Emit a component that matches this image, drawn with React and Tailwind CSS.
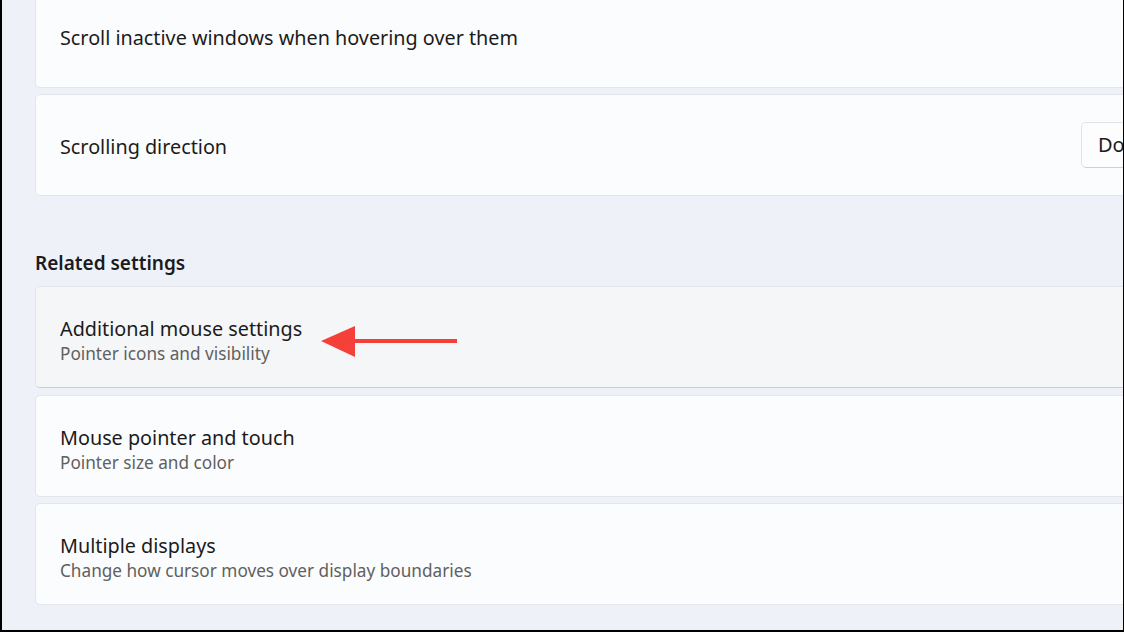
import React from "react";

const font = { fontFamily: '"Noto Sans", "Open Sans", sans-serif' };

function Card({ title, subtitle, hover, children, className = "", tPad = "pt-[1px]" }) {
  return (
    <div
      className={`flex h-[102px] w-[1110px] shrink-0 items-center justify-between rounded-[5px] border pl-[24px] ${
        hover
          ? "border-[#e3e5e9] border-b-[#c9ccd1] bg-[#f5f6f8]"
          : "border-[#e4e6ea] bg-[#fbfcfd]"
      } ${className}`}
    >
      <div className={`flex flex-col ${subtitle ? "pt-[8px]" : tPad}`}>
        <div className="text-[19.8px] leading-[24px] text-[#1b1b1b]">{title}</div>
        {subtitle && (
          <div className="text-[17.2px] leading-[25px] text-[#606060]">{subtitle}</div>
        )}
      </div>
      {children}
    </div>
  );
}

export default function App() {
  return (
    <div className="h-[632px] w-[1124px] overflow-hidden bg-black" style={font}>
      <div className="relative ml-[2px] mr-[1px] h-[630px] overflow-hidden bg-[#eef2f8]">
        <div className="-mt-[14px] flex flex-col pl-[33px]">
          <Card title="Scroll inactive windows when hovering over them" />
          <Card title="Scrolling direction" className="mt-[6px]" tPad="pt-[4px]">
            <div className="mr-[-57px] flex h-[46px] w-[120px] items-center overflow-hidden whitespace-nowrap rounded-[5px] border border-[#e2e3e6] border-b-[#cfd1d5] bg-[#fdfdfd] pl-[16px] text-[20px] text-[#1b1b1b]">
              Down motion scrolls down
            </div>
          </Card>
          <div className="mt-[54px] mb-[10px] text-[19px] font-semibold leading-[26px] text-[#1b1b1b]">
            Related settings
          </div>
          <Card title="Additional mouse settings" subtitle="Pointer icons and visibility" hover />
          <Card title="Mouse pointer and touch" subtitle="Pointer size and color" className="mt-[7px]" />
          <Card title="Multiple displays" subtitle="Change how cursor moves over display boundaries" className="mt-[6px]" />
        </div>
        <svg
          className="absolute left-[317px] top-[324px]"
          width="142"
          height="36"
          viewBox="0 0 142 36"
        >
          <polygon points="2,17 36,2 36,33" fill="#f5403a" />
          <rect x="34" y="15" width="104" height="4" fill="#f5403a" />
        </svg>
      </div>
    </div>
  );
}
